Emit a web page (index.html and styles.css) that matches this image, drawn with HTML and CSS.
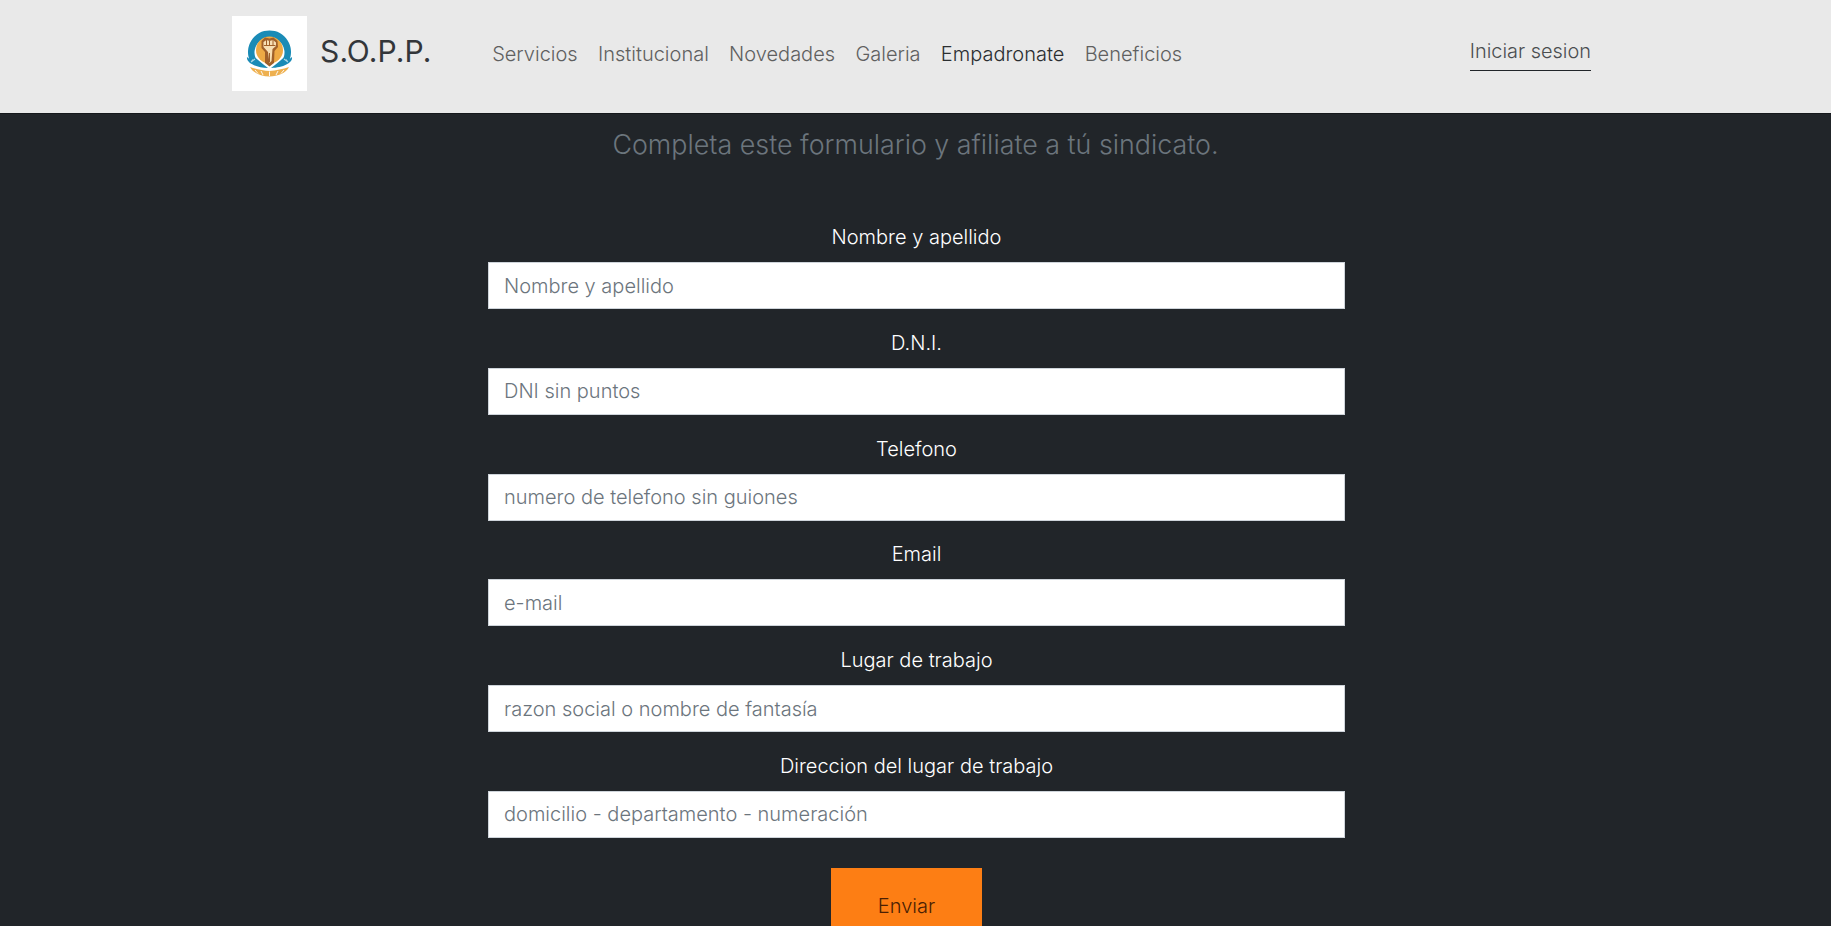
FILE: index.html
```html
<!DOCTYPE html>
<html lang="es">
<head>
<meta charset="utf-8">
<title>S.O.P.P.</title>
<link rel="stylesheet" href="styles.css">
</head>
<body>
<header class="topbar">
  <a class="brand" href="#">
    <span class="logo">
      <svg viewBox="0 0 75 75" width="75" height="75" aria-hidden="true">
        <path d="M18 45 A21.500 21.500 0 1 1 57 45 L51.500 42 A15 15 0 1 0 23.500 42 Z" fill="#1a8bb6"/>
        <circle cx="37.500" cy="34" r="13.500" fill="#eeaa45"/>
        <path d="M29.500 25 L33 21.500 L37.500 22.500 L41.500 21.500 L45.500 25 L46 31 L42.500 35 L42 47 L37.500 50.500 L33 47 L33 36 L29.500 32 Z" fill="#a0602a"/>
        <path d="M31.500 26 L34.500 24 L37.500 25 L41 24 L44 26.500 L44 30 L40.500 33 L39.500 45 L37.500 47 L36 36 L31.500 31 Z" fill="#f7dfb4"/>
        <path d="M34.500 24 L34.500 29 M37.500 25 L37.500 29.500 M41 24 L41 29.500 M32 29.500 L43.500 29.500 M37.500 37 L37.500 46" stroke="#a0602a" stroke-width="1" fill="none"/>
        <path d="M15 41 C14 47 24 51.500 36 52 C29 47 24 42 20 39 C21 42 21 44 21 45 C19 44 17 43 15 41 Z" fill="#1a8bb6"/>
        <path d="M60 41 C61 47 51 51.500 39 52 C46 47 51 42 55 39 C54 42 54 44 54 45 C56 44 58 43 60 41 Z" fill="#1a8bb6"/>
        <path d="M19 46 L23 43 M56 46 L52 43" stroke="#a9d6e6" stroke-width="1.200"/>
        <path d="M18 51 C24 53 31 54.500 37.500 55 C44 54.500 51 53 57 51 C54 57 46 60.500 37.500 60.500 C29 60.500 21 57 18 51 Z" fill="#eeb04f"/>
        <path d="M23 54 L26 57.500 M29 55 L31 59 M37.500 55.500 L37.500 60 M46 55 L44 59 M52 54 L49 57.500" stroke="#fff" stroke-width="0.900"/>
      </svg>
    </span>
    <span class="brand-name">S.O.P.P.</span>
  </a>
  <nav class="nav">
    <a href="#">Servicios</a>
    <a href="#">Institucional</a>
    <a href="#">Novedades</a>
    <a href="#">Galeria</a>
    <a href="#" class="active">Empadronate</a>
    <a href="#">Beneficios</a>
  </nav>
  <a class="login" href="#">Iniciar sesion</a>
</header>
<main class="content">
  <p class="lead">Completa este formulario y afiliate a tú sindicato.</p>
  <form class="form">
    <div class="field"><label for="a">Nombre y apellido</label><input id="a" type="text" placeholder="Nombre y apellido"></div>
    <div class="field"><label for="b">D.N.I.</label><input id="b" type="text" placeholder="DNI sin puntos"></div>
    <div class="field"><label for="c">Telefono</label><input id="c" type="text" placeholder="numero de telefono sin guiones"></div>
    <div class="field"><label for="d">Email</label><input id="d" type="text" placeholder="e-mail"></div>
    <div class="field"><label for="e">Lugar de trabajo</label><input id="e" type="text" placeholder="razon social o nombre de fantasía"></div>
    <div class="field"><label for="f">Direccion del lugar de trabajo</label><input id="f" type="text" placeholder="domicilio - departamento - numeración"></div>
    <button class="send" type="button">Enviar</button>
  </form>
</main>
</body>
</html>
```
FILE: styles.css
```css
* { box-sizing: border-box; }
html, body { margin: 0; height: 100%; overflow: hidden; }
body { background: #212529; font-family: Inter, "Liberation Sans", sans-serif; }
a { text-decoration: none; }

.topbar {
  height: 114px;
  background: #e9e9e9;
  border-bottom: 1px solid #15181b;
  display: flex;
  align-items: flex-start;
  padding-left: 232px;
}
.brand { display: flex; align-items: center; margin-top: 16px; color: #33363a; }
.logo { width: 75px; height: 75px; background: #fff; display: block; }
.logo svg { display: block; }
.brand-name { margin-left: 13px; font-size: 30px; font-weight: 400; letter-spacing: 0.150px; line-height: 71px; height: 75px; }
.nav { display: flex; gap: 20.300px; margin-left: 60.500px; margin-top: 42px; }
.nav a { font-size: 20px; font-weight: 300; line-height: 24px; color: #5f6060; }
.nav a.active { color: #2b2e31; }
.login {
  margin-left: auto;
  margin-right: 240px;
  margin-top: 38px;
  padding-bottom: 6px;
  font-size: 19.900px;
  font-weight: 300;
  line-height: 26px;
  color: #4b4e50;
  border-bottom: 1px solid #212529;
}

.content { display: flex; flex-direction: column; align-items: center; }
.lead { margin: 13px 0 0; font-size: 26.850px; font-weight: 300; line-height: 34px; color: #6c757d; }
.form { width: 857px; margin: 62px 0 0 2px; display: flex; flex-direction: column; align-items: center; }
.field { width: 100%; height: 105.800px; display: flex; flex-direction: column; }
.field label { height: 39px; line-height: 24px; padding-top: 2px; font-size: 20px; color: #fff; text-align: center; font-weight: 300; }
.field input {
  width: 100%;
  height: 47px;
  border: 1px solid #ced4da;
  border-radius: 0;
  padding: 0 15px;
  background: #fff;
  font: 300 20px Inter, "Liberation Sans", sans-serif;
  color: #212529;
}
.field input::placeholder { color: #6c757d; opacity: 1; }
.send {
  width: 151px;
  height: 90px;
  margin-top: 10.200px;
  margin-left: -20px;
  border: 0;
  padding: 0 0 14px;
  background: #fd7e14;
  color: #4a1f04;
  font: 300 20px Inter, "Liberation Sans", sans-serif;
}
```
